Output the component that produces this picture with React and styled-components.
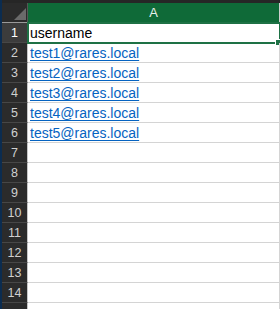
import React from "react";
import styled, { createGlobalStyle } from "styled-components";

const GlobalStyle = createGlobalStyle`
  html, body {
    margin: 0;
    padding: 0;
    background: #ffffff;
    overflow: hidden;
  }
`;

const Window = styled.div`
  display: flex;
  width: 280px;
  height: 309px;
  overflow: hidden;
  font-family: "Liberation Sans", Arial, sans-serif;
`;

const SideStrip = styled.div`
  width: 2px;
  flex-shrink: 0;
  background-color: #0b2c50;
`;

const Sheet = styled.div`
  flex: 1;
  display: flex;
  flex-direction: column;
  background-color: #ffffff;
`;

const TopBar = styled.div`
  height: 3px;
  flex-shrink: 0;
  background-color: #262626;
`;

const Row = styled.div`
  display: grid;
  grid-template-columns: 26px 1fr;
  height: 20px;
  flex-shrink: 0;
`;

const Corner = styled.div`
  display: flex;
  align-items: flex-end;
  justify-content: flex-end;
  padding: 0 1px 2px 0;
  background-color: #2b2b2b;
  border-bottom: 1px solid #9a9a9a;
  border-right: 1px solid #555555;
`;

const CornerTriangle = styled.div`
  width: 12px;
  height: 12px;
  background-color: #6a6a6a;
  clip-path: polygon(100% 0, 100% 100%, 0 100%);
`;

const ColHeader = styled.div`
  display: flex;
  align-items: center;
  justify-content: center;
  background-color: #0f6a38;
  color: #e6f0ea;
  font-size: 13px;
  border-bottom: 1px solid #3c9461;
  border-right: 1px solid #cfcfcf;
`;

const RowHeader = styled.div`
  display: flex;
  align-items: center;
  justify-content: center;
  font-size: 12.5px;
  background-color: ${(p) => (p.$active ? "#3c3c3c" : "#2b2b2b")};
  color: ${(p) => (p.$active ? "#ffffff" : "#d0d0d0")};
  border-bottom: 1px solid #474747;
  border-right: 1px solid ${(p) => (p.$active ? "#1e7145" : "#c6c6c6")};
`;

const Cell = styled.div`
  position: relative;
  display: flex;
  align-items: center;
  padding-left: 2px;
  font-size: 14px;
  color: #000000;
  white-space: nowrap;
  border-bottom: 1px solid #d4d4d4;
  border-right: 1px solid #d4d4d4;

  ${(p) =>
    p.$selected &&
    `
    outline: 2px solid #1e7145;
    outline-offset: -1px;
    &::after {
      content: "";
      position: absolute;
      right: -2px;
      bottom: -3px;
      width: 5px;
      height: 5px;
      background-color: #1e7145;
      border-left: 1px solid #ffffff;
      border-top: 1px solid #ffffff;
    }
  `}
`;

const Link = styled.a`
  color: #0563c1;
  text-decoration: underline;
  text-underline-offset: 2px;
`;

const emails = [
  "test1@rares.local",
  "test2@rares.local",
  "test3@rares.local",
  "test4@rares.local",
  "test5@rares.local",
];

const App = () => {
  const rows = [];
  for (let i = 1; i <= 15; i++) {
    let content = null;
    if (i === 1) content = "username";
    else if (emails[i - 2]) content = <Link href="#">{emails[i - 2]}</Link>;
    // the 15th row only peeks in at the bottom edge, its number is hidden
    rows.push(
      <Row key={i}>
        <RowHeader $active={i === 1}>{i < 15 ? i : null}</RowHeader>
        <Cell $selected={i === 1}>{content}</Cell>
      </Row>
    );
  }

  return (
    <>
      <GlobalStyle />
      <Window>
        <SideStrip />
        <Sheet>
          <TopBar />
          <Row>
            <Corner>
              <CornerTriangle />
            </Corner>
            <ColHeader>A</ColHeader>
          </Row>
          {rows}
        </Sheet>
      </Window>
    </>
  );
};

export default App;
